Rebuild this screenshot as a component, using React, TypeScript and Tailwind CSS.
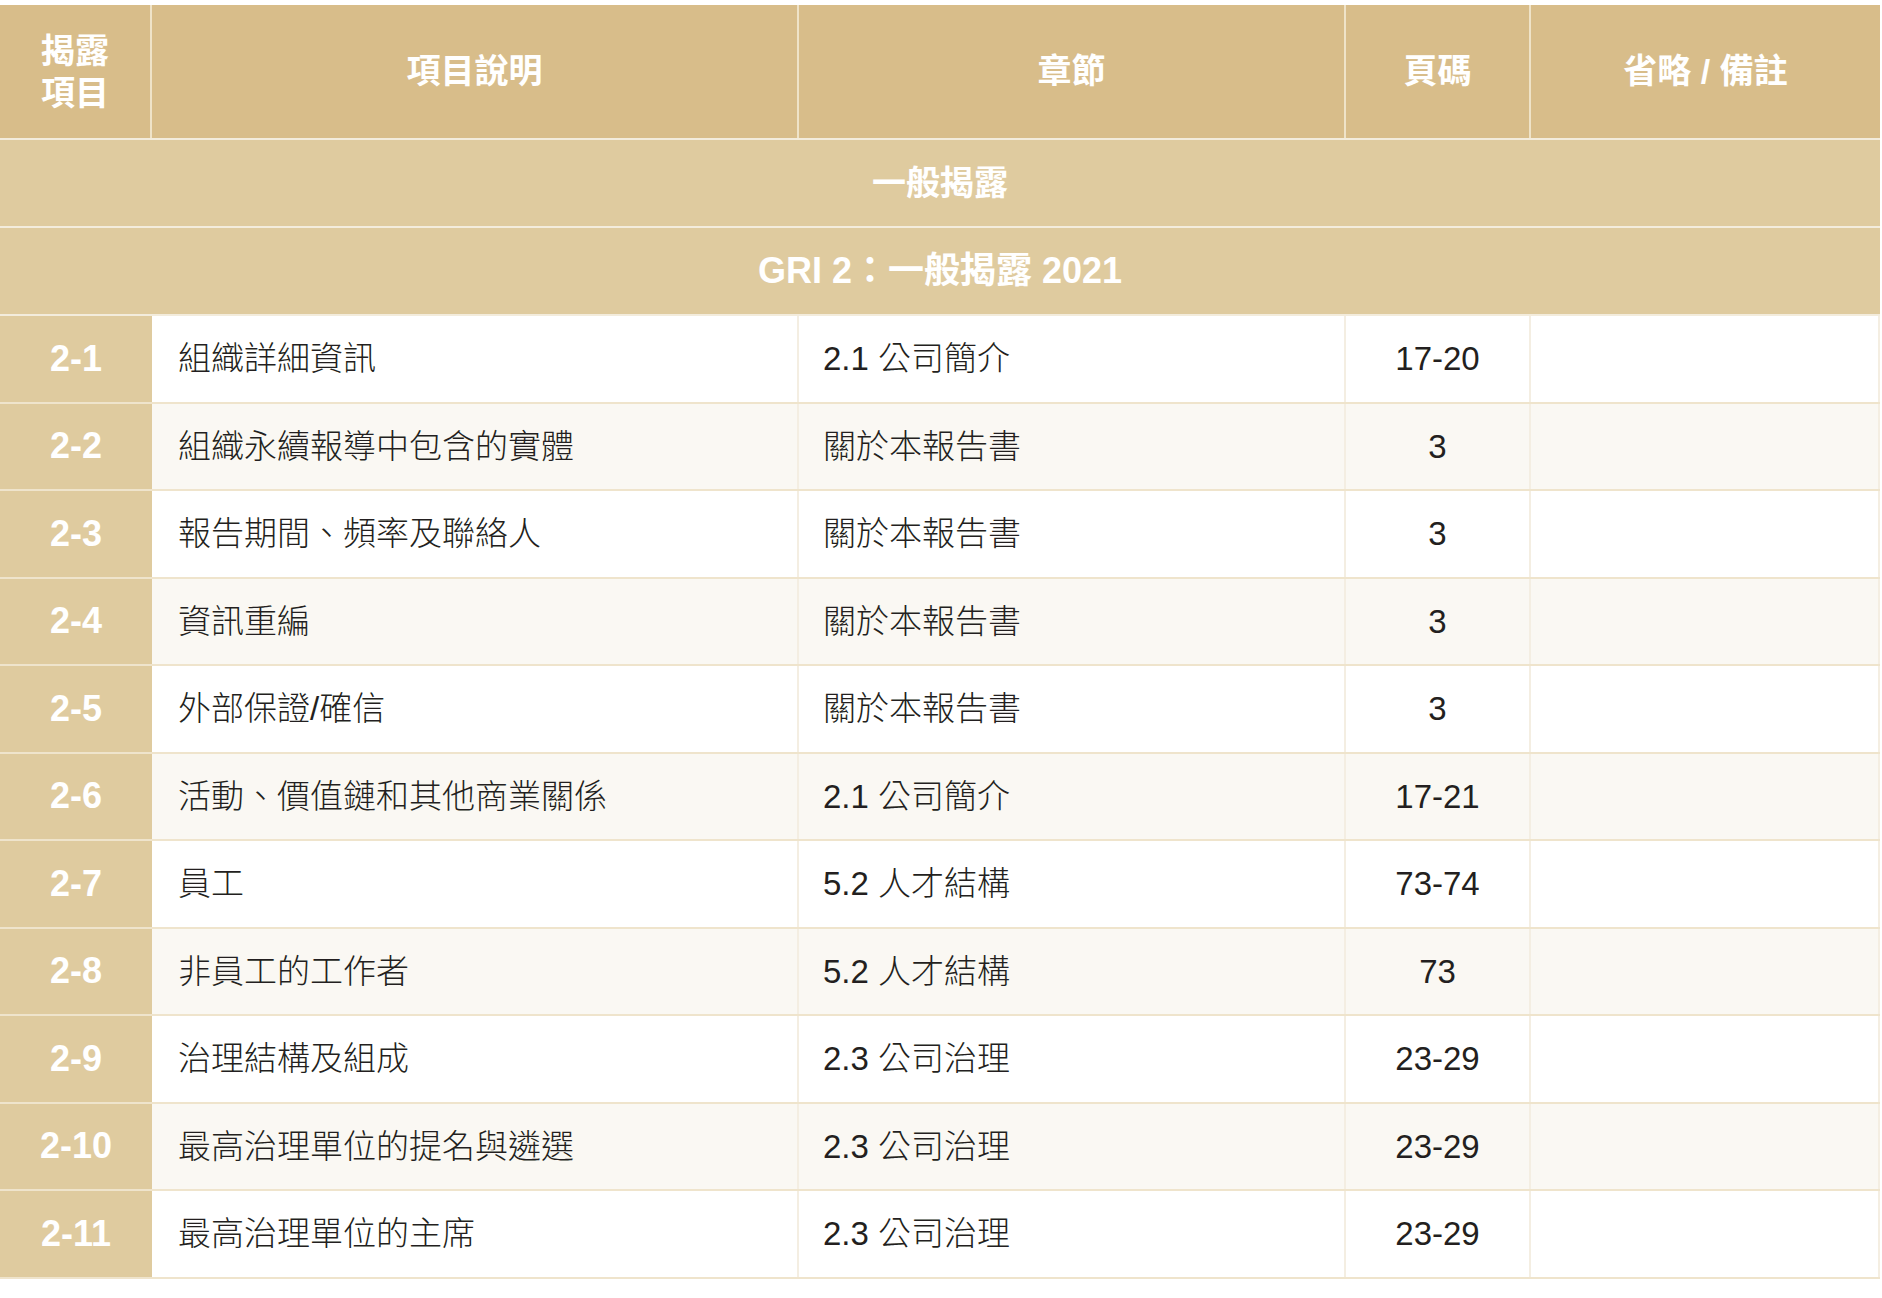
const rows: [string, string, string, string][] = [
  ["2-1", "組織詳細資訊", "2.1 公司簡介", "17-20"],
  ["2-2", "組織永續報導中包含的實體", "關於本報告書", "3"],
  ["2-3", "報告期間、頻率及聯絡人", "關於本報告書", "3"],
  ["2-4", "資訊重編", "關於本報告書", "3"],
  ["2-5", "外部保證/確信", "關於本報告書", "3"],
  ["2-6", "活動、價值鏈和其他商業關係", "2.1 公司簡介", "17-21"],
  ["2-7", "員工", "5.2 人才結構", "73-74"],
  ["2-8", "非員工的工作者", "5.2 人才結構", "73"],
  ["2-9", "治理結構及組成", "2.3 公司治理", "23-29"],
  ["2-10", "最高治理單位的提名與遴選", "2.3 公司治理", "23-29"],
  ["2-11", "最高治理單位的主席", "2.3 公司治理", "23-29"],
];

const font = { fontFamily: '"Liberation Sans", "Noto Sans CJK TC", sans-serif' };

export default function App() {
  return (
    <div className="w-[1882px] h-[1298px] bg-white pt-[5px]" style={font}>
      <div className="w-[1880px]">
        <div className="grid grid-cols-[152px_647px_547px_185px_349px] h-[133px] bg-[#d8bd8a] text-white font-bold text-[34px]">
          <div className="flex items-center justify-center text-center leading-[42px] border-r-2 border-[#efe3c8]">揭露<br />項目</div>
          <div className="flex items-center justify-center border-r-2 border-[#efe3c8]">項目說明</div>
          <div className="flex items-center justify-center border-r-2 border-[#efe3c8]">章節</div>
          <div className="flex items-center justify-center border-r-2 border-[#efe3c8]">頁碼</div>
          <div className="flex items-center justify-center">省略 / 備註</div>
        </div>
        <div className="h-[2px] bg-[#f3ecdc]" />
        <div className="h-[86px] bg-[#dfcb9f] flex items-center justify-center text-white font-bold text-[34px]">一般揭露</div>
        <div className="h-[2px] bg-[#f3ecdc]" />
        <div className="h-[86px] bg-[#dfcb9f] flex items-center justify-center text-white font-bold text-[36px]">GRI 2：一般揭露 2021</div>
        <div className="h-[2px] bg-[#f3ecdc]" />
        {rows.map((r, i) => (
          <div key={r[0]} className={`grid grid-cols-[152px_647px_547px_185px_349px] h-[87.5px] border-b-2 border-[#efe4cc] text-[33px] text-[#231f20] ${i % 2 ? "bg-[#faf8f3]" : "bg-white"}`}>
            <div className="bg-[#dfcb9f] flex items-center justify-center text-white font-bold text-[36px]">{r[0]}</div>
            <div className="flex items-center pl-[26px] border-r-2 border-[#f4eee2] font-light">{r[1]}</div>
            <div className="flex items-center pl-[24px] border-r-2 border-[#f4eee2] font-light">{r[2]}</div>
            <div className="flex items-center justify-center border-r-2 border-[#f4eee2]">{r[3]}</div>
            <div className="border-r-2 border-[#f4eee2]" />
          </div>
        ))}
      </div>
    </div>
  );
}
